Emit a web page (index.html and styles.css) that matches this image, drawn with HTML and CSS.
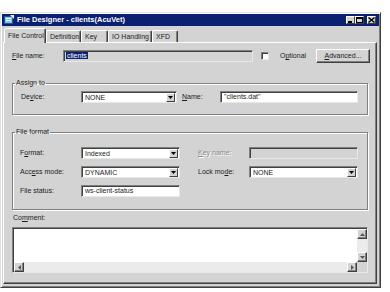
FILE: index.html
```html
<!DOCTYPE html>
<html lang="en">
<head>
    <meta charset="UTF-8">
    <meta name="viewport" content="width=device-width, initial-scale=1.0">
    <title>File Designer - clients(AcuVet)</title>
    <link rel="stylesheet" href="styles.css">
</head>
<body>
    <div class="window">
        <div class="titlebar">
            <svg class="app-icon" width="10" height="10" viewBox="0 0 10 10">
                <rect x="0.5" y="1.5" width="8" height="7" fill="#7fc8e8" stroke="#1d5a8a" stroke-width="1"/>
                <rect x="2" y="3" width="5" height="1" fill="#fff"/>
                <rect x="2" y="5" width="5" height="1" fill="#fff"/>
                <path d="M6 0 L10 0 L10 4 Z" fill="#e6f4fb"/>
            </svg>
            <span class="title">File Designer - clients(AcuVet)</span>
            <div class="title-buttons">
                <span class="tbtn"><svg width="7" height="6" viewBox="0 0 7 6"><rect x="1" y="4" width="4" height="2" fill="#000"/></svg></span>
                <span class="tbtn"><svg width="7" height="6" viewBox="0 0 7 6"><rect x="0.5" y="0.5" width="6" height="5" fill="none" stroke="#000"/><rect x="0" y="0" width="7" height="2" fill="#000"/></svg></span>
                <span class="tbtn tbtn-close"><svg width="7" height="6" viewBox="0 0 7 6"><path d="M0.5 0.5 L6.5 5.5 M6.5 0.5 L0.5 5.5" stroke="#000" stroke-width="1.4"/></svg></span>
            </div>
        </div>

        <div class="tabs">
            <span class="tab active">File Control</span>
            <span class="tab">Definition</span>
            <span class="tab">Key</span>
            <span class="tab">IO Handling</span>
            <span class="tab">XFD</span>
        </div>

        <div class="panel">
            <div class="file-row">
                <span class="lbl lbl-file"><u>F</u>ile name:</span>
                <div class="field field-file"><span class="selected">clients</span></div>
                <span class="checkbox"></span>
                <span class="lbl-optional">O<u>p</u>tional</span>
                <span class="btn"><u>A</u>dvanced...</span>
            </div>

            <fieldset class="group group-assign">
                <legend>Assign to</legend>
                <div class="group-body assign-row">
                    <span class="lbl lbl-device">De<u>v</u>ice:</span>
                    <div class="select select-device">
                        <span class="value">NONE</span>
                        <span class="arrow"><svg width="5" height="3" viewBox="0 0 5 3"><path d="M0 0 H5 L2.5 3 Z" fill="#000"/></svg></span>
                    </div>
                    <span class="lbl lbl-name"><u>N</u>ame:</span>
                    <div class="field field-name">"clients.dat"</div>
                </div>
            </fieldset>

            <fieldset class="group group-format">
                <legend>File format</legend>
                <div class="group-body format-grid">
                    <span class="lbl">F<u>o</u>rmat:</span>
                    <div class="select">
                        <span class="value">Indexed</span>
                        <span class="arrow"><svg width="5" height="3" viewBox="0 0 5 3"><path d="M0 0 H5 L2.5 3 Z" fill="#000"/></svg></span>
                    </div>
                    <span class="lbl lbl-right lbl-disabled"><u>K</u>ey name:</span>
                    <div class="field field-disabled"></div>

                    <span class="lbl">Acc<u>e</u>ss mode:</span>
                    <div class="select">
                        <span class="value">DYNAMIC</span>
                        <span class="arrow"><svg width="5" height="3" viewBox="0 0 5 3"><path d="M0 0 H5 L2.5 3 Z" fill="#000"/></svg></span>
                    </div>
                    <span class="lbl lbl-right">Lock mo<u>d</u>e:</span>
                    <div class="select">
                        <span class="value">NONE</span>
                        <span class="arrow"><svg width="5" height="3" viewBox="0 0 5 3"><path d="M0 0 H5 L2.5 3 Z" fill="#000"/></svg></span>
                    </div>

                    <span class="lbl">File status:</span>
                    <div class="field">ws-client-status</div>
                </div>
            </fieldset>

            <div class="comment-label">Co<u>m</u>ment:</div>
            <div class="comment-box">
                <div class="comment-text"></div>
                <div class="vscroll">
                    <span class="sbtn"><svg width="5" height="3" viewBox="0 0 5 3"><path d="M0 3 H5 L2.5 0 Z" fill="#555"/></svg></span>
                    <span class="track"></span>
                    <span class="sbtn"><svg width="5" height="3" viewBox="0 0 5 3"><path d="M0 0 H5 L2.5 3 Z" fill="#555"/></svg></span>
                </div>
                <div class="hscroll">
                    <span class="sbtn"><svg width="3" height="5" viewBox="0 0 3 5"><path d="M3 0 V5 L0 2.5 Z" fill="#555"/></svg></span>
                    <span class="track"></span>
                    <span class="sbtn"><svg width="3" height="5" viewBox="0 0 3 5"><path d="M0 0 V5 L3 2.5 Z" fill="#555"/></svg></span>
                </div>
                <div class="corner"></div>
            </div>
        </div>
    </div>
</body>
</html>
```

FILE: styles.css
```css
:root {
    --face: #d3d3d3;
    --light: #ffffff;
    --shadow: #808080;
    --dark: #404040;
    --text: #1c1c1c;
    --title: #0a2070;
}

* {
    box-sizing: border-box;
}

body {
    margin: 0;
    background: #fff;
    font-family: 'Liberation Sans', Arial, sans-serif;
    font-size: 7px;
    line-height: 8px;
    color: var(--text);
}

u {
    text-decoration-thickness: 1px;
    text-underline-offset: 1px;
}

/* window frame */
.window {
    margin-top: 12px;
    width: 381px;
    background: var(--face);
    border: 1px solid;
    border-color: #e0e0e0 var(--dark) var(--dark) #e0e0e0;
    box-shadow: inset 1px 1px 0 var(--light), inset -1px -1px 0 var(--shadow);
    padding: 1px 1px 3px 1px;
}

.titlebar {
    height: 12px;
    background: var(--title);
    display: flex;
    align-items: center;
    padding: 0 3px 0 2px;
}

.app-icon {
    flex: none;
}

.title {
    margin-left: 3px;
    color: #fff;
    font-weight: bold;
    font-size: 7.5px;
    flex: 1;
    white-space: nowrap;
}

.title-buttons {
    display: flex;
}

.tbtn {
    width: 9px;
    height: 8px;
    background: var(--face);
    border: 1px solid;
    border-color: var(--light) var(--dark) var(--dark) var(--light);
    display: flex;
    align-items: center;
    justify-content: center;
}

.tbtn-close {
    margin-left: 3px;
}

/* tabs */
.tabs {
    margin-top: 2px;
    height: 14px;
    display: flex;
    align-items: flex-end;
    padding-left: 2px;
}

.tab {
    height: 12px;
    padding: 2px 3px 0 3px;
    border: 1px solid;
    border-bottom: none;
    border-color: var(--light) var(--dark) transparent var(--light);
    border-radius: 2px 2px 0 0;
    box-shadow: inset -1px 0 0 var(--shadow);
    white-space: nowrap;
}

.tab:nth-child(2) { width: 35px; }
.tab:nth-child(3) { width: 27px; }
.tab:nth-child(4) { width: 44px; }
.tab:nth-child(5) { width: 26px; }

.tab.active {
    width: 42px;
    height: 15px;
    margin-bottom: -1px;
    padding-top: 3px;
    background: var(--face);
    position: relative;
    z-index: 1;
}

/* panel */
.panel {
    margin-left: 1px;
    width: 374px;
    height: 242px;
    border: 1px solid;
    border-color: var(--light) var(--dark) var(--dark) var(--light);
    box-shadow: inset -1px -1px 0 var(--shadow);
}

.lbl {
    white-space: nowrap;
}

.lbl-disabled {
    color: #8a8a8a;
    text-shadow: 1px 1px 0 #fff;
}

.field,
.select {
    height: 12px;
    background: #fff;
    border: 1px solid;
    border-color: var(--shadow) #e8e8e8 #e8e8e8 var(--shadow);
    box-shadow: inset 1px 1px 0 var(--dark);
    padding: 1px 2px 0 3px;
    white-space: nowrap;
}

.field-disabled {
    background: var(--face);
}

.select {
    display: flex;
    align-items: center;
    padding: 1px 1px 0 3px;
}

.select .value {
    flex: 1;
}

.select .arrow {
    width: 9px;
    height: 9px;
    background: var(--face);
    border: 1px solid;
    border-color: var(--light) var(--dark) var(--dark) var(--light);
    display: flex;
    align-items: center;
    justify-content: center;
}

/* file name row */
.file-row {
    margin-top: 6px;
    height: 14px;
    display: flex;
    align-items: center;
    padding-left: 8px;
}

.lbl-file {
    width: 51px;
}

.field-file {
    width: 190px;
    background: var(--face);
    padding-left: 2px;
}

.selected {
    background: var(--title);
    color: #fff;
    padding: 0 1px;
}

.checkbox {
    margin-left: 8px;
    width: 8px;
    height: 8px;
    background: #fff;
    border: 1px solid;
    border-color: var(--shadow) #e8e8e8 #e8e8e8 var(--shadow);
    box-shadow: inset 1px 1px 0 var(--dark);
}

.lbl-optional {
    margin-left: 11px;
    width: 36px;
}

.btn {
    width: 54px;
    height: 14px;
    border: 1px solid;
    border-color: var(--light) var(--dark) var(--dark) var(--light);
    box-shadow: inset -1px -1px 0 var(--shadow);
    display: flex;
    align-items: center;
    justify-content: center;
}

/* group boxes */
.group {
    margin: 0 0 0 8px;
    width: 356px;
    padding: 0;
    min-inline-size: 0;
    border: 1px solid var(--shadow);
    box-shadow: inset 1px 1px 0 var(--light), 1px 1px 0 var(--light);
}

.group legend {
    margin-left: 2px;
    padding: 0 1px;
    line-height: 8px;
}

.group-assign {
    margin-top: 16px;
}

.group-format {
    margin-top: 13px;
}

.assign-row {
    display: flex;
    align-items: center;
    padding: 4px 0 11px 8px;
}

.lbl-device {
    width: 60px;
}

.select-device {
    width: 96px;
}

.lbl-name {
    margin-left: 5px;
    width: 38px;
}

.field-name {
    width: 138px;
}

.format-grid {
    display: grid;
    grid-template-columns: 61px 99px 69px 109px;
    row-gap: 7px;
    align-items: center;
    padding: 11px 0 12px 7px;
}

.format-grid .lbl-right {
    margin-left: 18px;
}

/* comment */
.comment-label {
    margin: 4px 0 0 9px;
}

.comment-box {
    margin: 5px 0 0 8px;
    width: 356px;
    height: 46px;
    background: #fff;
    border: 1px solid;
    border-color: var(--shadow) #e8e8e8 #e8e8e8 var(--shadow);
    box-shadow: inset 1px 1px 0 var(--dark);
    padding: 1px 0 0 1px;
    display: grid;
    grid-template-columns: 1fr 10px;
    grid-template-rows: 1fr 10px;
}

.vscroll {
    display: flex;
    flex-direction: column;
}

.hscroll {
    display: flex;
}

.track {
    flex: 1;
    background: #ebebeb;
}

.sbtn {
    flex: none;
    width: 10px;
    height: 10px;
    background: var(--face);
    border: 1px solid;
    border-color: var(--light) var(--dark) var(--dark) var(--light);
    box-shadow: inset -1px -1px 0 var(--shadow);
    display: flex;
    align-items: center;
    justify-content: center;
}

.corner {
    background: var(--face);
}
```
